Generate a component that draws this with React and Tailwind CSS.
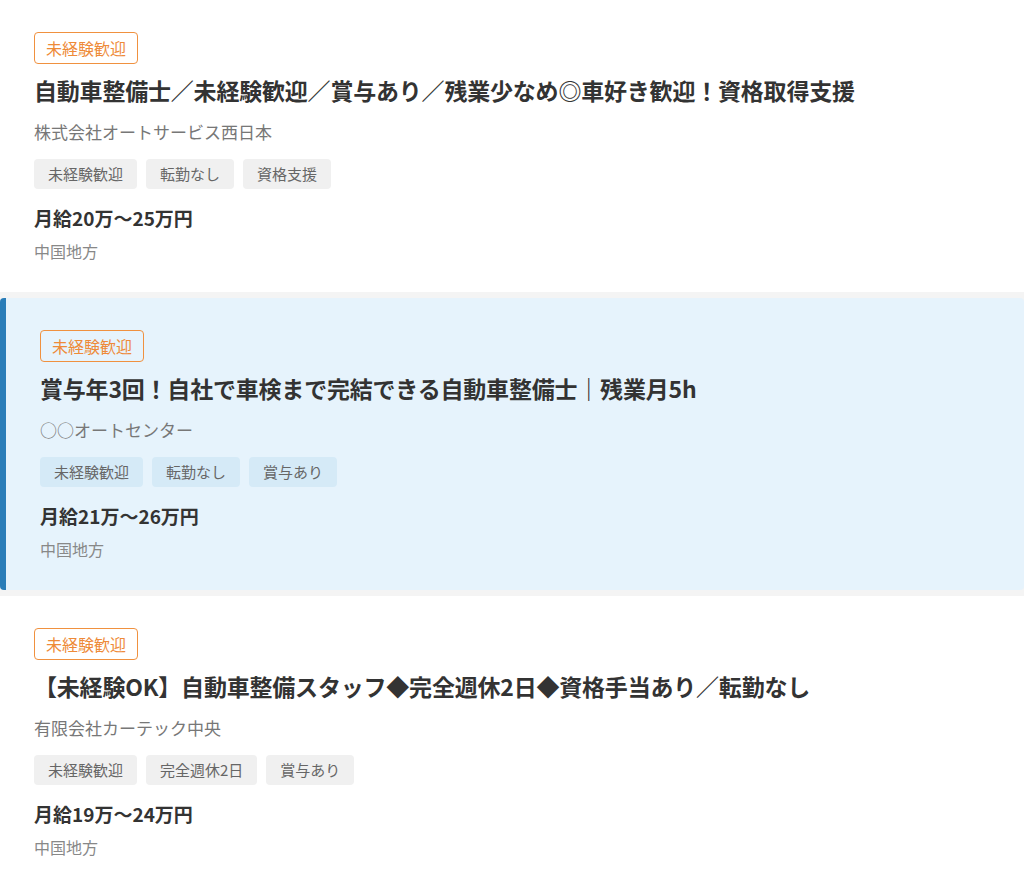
import React from "react";

const jobs = [
  {
    title: "自動車整備士／未経験歓迎／賞与あり／残業少なめ◎車好き歓迎！資格取得支援",
    company: "株式会社オートサービス西日本",
    tags: ["未経験歓迎", "転勤なし", "資格支援"],
    salary: "月給20万～25万円",
    area: "中国地方",
  },
  {
    title: "賞与年3回！自社で車検まで完結できる自動車整備士｜残業月5h",
    company: "○○オートセンター",
    tags: ["未経験歓迎", "転勤なし", "賞与あり"],
    salary: "月給21万～26万円",
    area: "中国地方",
    active: true,
  },
  {
    title: "【未経験OK】自動車整備スタッフ◆完全週休2日◆資格手当あり／転勤なし",
    company: "有限会社カーテック中央",
    tags: ["未経験歓迎", "完全週休2日", "賞与あり"],
    salary: "月給19万～24万円",
    area: "中国地方",
  },
];

function JobCard({ job }) {
  return (
    <article
      className={
        job.active
          ? "bg-[#e6f3fc] border-l-[6px] border-[#2a7db8] rounded-[4px] pl-[34px] pr-8 pt-8 pb-[30px]"
          : "bg-white px-[34px] pt-8 pb-[30px]"
      }
    >
      <span className="inline-flex items-center h-8 px-[11px] border-[1.5px] border-[#f0913f] rounded-[4px] text-[16px] text-[#ee8a38]">
        未経験歓迎
      </span>
      <h2 className="mt-[9px] text-[23px] leading-[34px] tracking-[-0.2px] font-bold text-[#333]">
        {job.title}
      </h2>
      <p className="mt-[13px] text-[17px] leading-6 text-[#777]">{job.company}</p>
      <ul className="mt-[15px] flex gap-[9px]">
        {job.tags.map((t) => (
          <li
            key={t}
            className={
              (job.active ? "bg-[#d5eaf7] " : "bg-[#f0f0f0] ") +
              "h-[30px] px-[14px] rounded-[4px] flex items-center text-[15px] text-[#666]"
            }
          >
            {t}
          </li>
        ))}
      </ul>
      <p className="mt-[17px] text-[19px] leading-6 font-bold text-[#333]">{job.salary}</p>
      <p className="mt-[11px] text-[16px] leading-[21px] text-[#888]">{job.area}</p>
    </article>
  );
}

export default function App() {
  return (
    <div
      className="min-h-screen bg-[#f4f4f4] flex flex-col gap-[6px]"
      style={{ fontFamily: '"Noto Sans CJK JP", "Noto Sans", sans-serif' }}
    >
      {jobs.map((j) => (
        <JobCard key={j.company} job={j} />
      ))}
    </div>
  );
}
